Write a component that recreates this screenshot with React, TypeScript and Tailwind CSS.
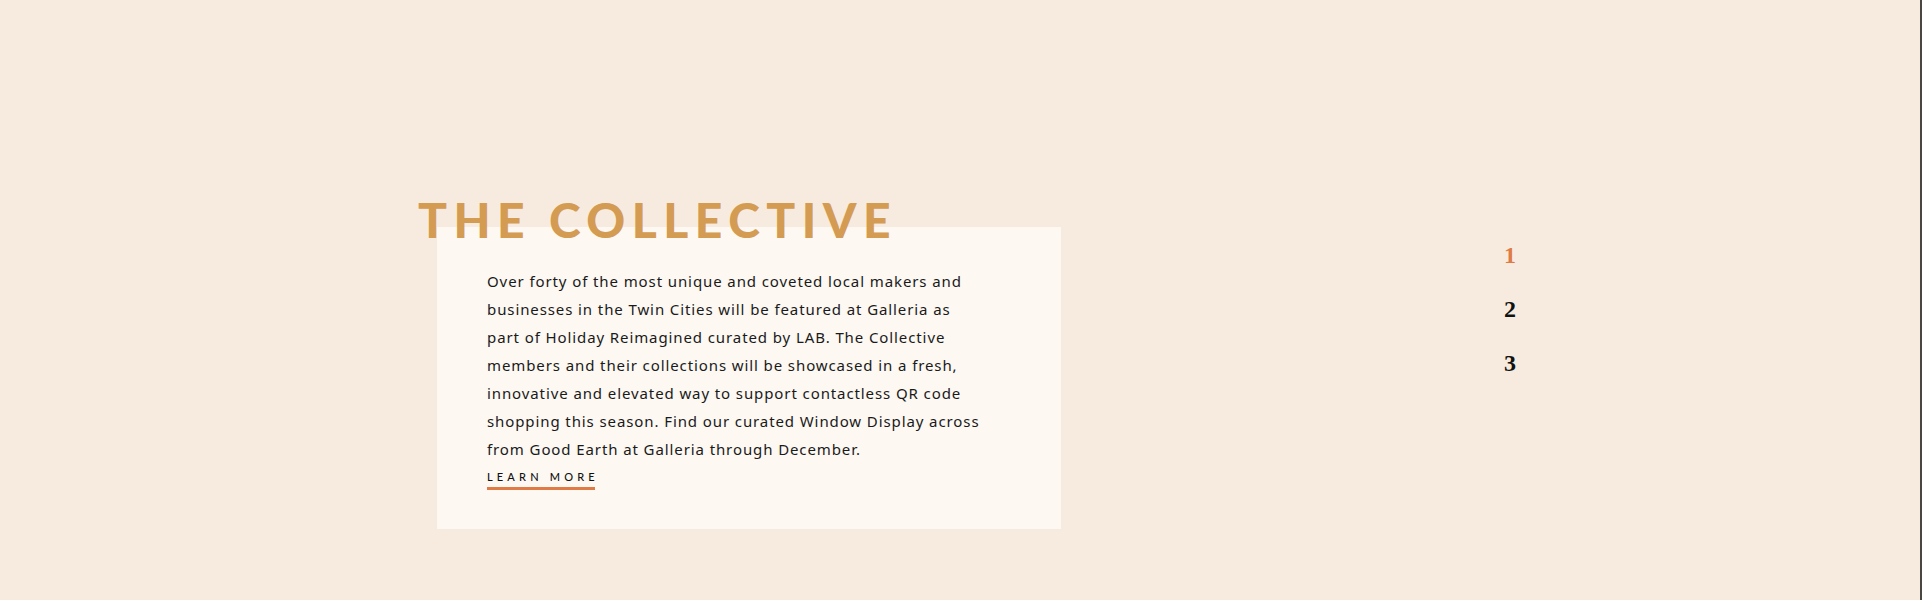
export default function App() {
  const steps = [1, 2, 3];
  const active = 1;

  return (
    <div className="min-h-[600px] w-full bg-[#f7ebdf] border-r-2 border-[#4a4642] overflow-hidden">
      <div className="flex pt-[196px] pl-[437px]">
        {/* Collective block */}
        <div className="w-[624px] flex flex-col">
          <h2
            className="relative z-10 -ml-[19px] text-[48px] leading-none font-black tracking-[0.135em] text-[#d49b53] whitespace-nowrap"
            style={{ fontFamily: "Lato, 'Liberation Sans', sans-serif" }}
          >
            THE COLLECTIVE
          </h2>
          <div className="-mt-[17px] h-[302px] bg-[#fdf8f2] pt-[40px] pl-[50px] pr-[80px]">
            <p
              className="text-[15px] leading-[28px] tracking-[0.9px] text-[#1a1a1a]"
              style={{ fontFamily: "'Noto Sans', 'Open Sans', sans-serif" }}
            >
              Over forty of the most unique and coveted local makers and businesses in the Twin
              Cities will be featured at Galleria as part of Holiday Reimagined curated by LAB. The
              Collective members and their collections will be showcased in a fresh, innovative and
              elevated way to support contactless QR code shopping this season. Find our curated
              Window Display across from Good Earth at Galleria through December.
            </p>
            <a
              href="#"
              className="mt-[6px] inline-block border-b-[3px] border-[#e07b45] pb-[3px] text-[11px] leading-[14px] font-medium tracking-[0.38em] text-[#111111]"
              style={{ fontFamily: "Lato, 'Liberation Sans', sans-serif" }}
            >
              LEARN MOR<span className="tracking-normal">E</span>
            </a>
          </div>
        </div>

        {/* Pager */}
        <div className="ml-[437px] mt-[32px] flex w-6 flex-col">
          {steps.map((n) => (
            <span
              key={n}
              className={
                n === active
                  ? "text-center text-[24px] leading-[54px] font-bold text-[#e07b45]"
                  : "text-center text-[24px] leading-[54px] font-bold text-[#111111]"
              }
              style={{ fontFamily: "'Liberation Serif', serif" }}
            >
              {n}
            </span>
          ))}
        </div>
      </div>
    </div>
  );
}
